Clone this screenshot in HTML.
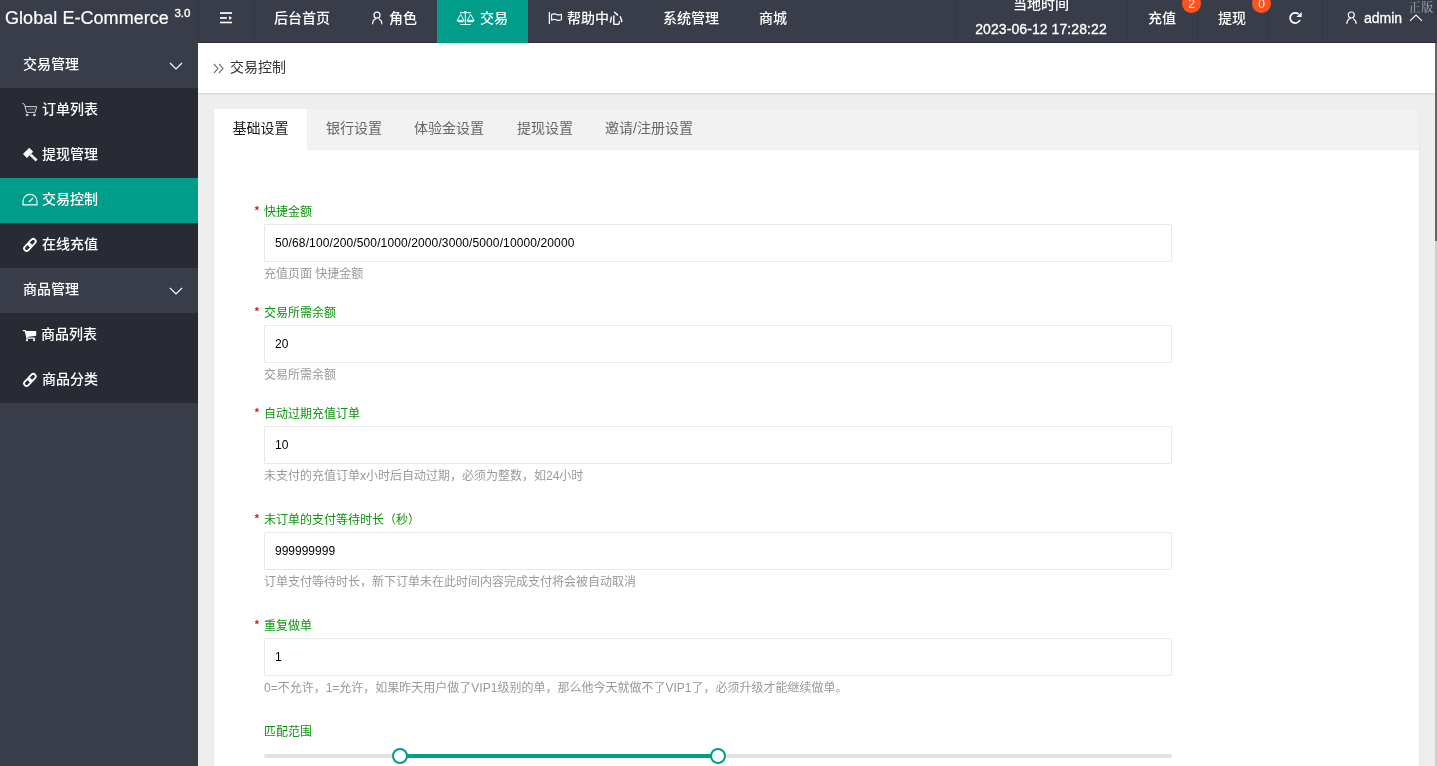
<!DOCTYPE html>
<html lang="zh-CN">
<head>
<meta charset="utf-8">
<title>交易控制</title>
<style>
*{box-sizing:border-box;margin:0;padding:0}
html,body{width:1437px;height:766px;overflow:hidden}
body{font-family:"Liberation Sans","Noto Sans CJK SC",sans-serif;font-size:14px;color:#333;background:#eeeeee;position:relative}
#root{position:absolute;left:0;top:0;width:1437px;height:766px;overflow:hidden;will-change:transform}
.abs{position:absolute}
/* header */
#hd{position:absolute;left:0;top:0;width:1437px;height:43px;background:#393d49;color:#fff;z-index:5}
#logo{position:absolute;left:5px;top:0.5px;height:43px;line-height:35px;font-size:18px;white-space:nowrap;letter-spacing:0.05px;-webkit-text-stroke:0.2px #fff}
#logo sup{font-size:11.5px;font-weight:400;position:relative;top:0px;left:-0.5px;letter-spacing:0;-webkit-text-stroke:0.35px #fff;vertical-align:super;line-height:0;margin-left:1px}
.nv{position:absolute;top:0;height:43px;line-height:36px;font-size:14px;color:#fff;white-space:nowrap;font-weight:500}
.sep{position:absolute;top:0;width:1px;height:43px;background:#343845}
.badge{position:absolute;top:-6.5px;width:19px;height:19px;border-radius:9.5px;background:#fb5420;color:#fff;font-size:12px;line-height:21px;text-align:center}
/* side */
#side{position:absolute;left:0;top:43px;width:198px;height:723px;background:#393d49}
.mi{position:absolute;left:0;width:198px;height:45px;line-height:43px;color:#fff;font-size:14px;font-weight:500;white-space:nowrap}
.mi.sub{background:#282b33}
.mi.act{background:#009d8b}
.mi span.t{position:absolute;top:0}
/* crumb */
#crumb{position:absolute;left:198px;top:43px;width:1237px;height:50px;background:#fff;box-shadow:0 1px 2px rgba(0,0,0,.12);line-height:48px;font-size:14px;color:#333}
/* card */
#card{position:absolute;left:214px;top:109px;width:1205px;height:700px;background:#fff;box-shadow:0 1px 2px 0 rgba(0,0,0,.06)}
#tabs{position:absolute;left:0;top:0;width:1205px;height:41px;background:#f2f2f2;border-bottom:1px solid #ebebeb}
.tab{position:absolute;top:0;height:40px;line-height:39px;font-size:14px;color:#666;white-space:nowrap}
.tab.on{left:0;width:93px;height:41px;background:#fff;color:#1a1a1a;text-align:center}
.lb{position:absolute;left:264px;font-size:12px;line-height:16px;color:#0c940c;white-space:nowrap}
.st{position:absolute;left:254.7px;font-size:11px;line-height:14px;color:#c9151b;font-weight:bold;margin-top:0px}
.ip{position:absolute;left:264px;width:908px;height:38px;border:1px solid #e8e8e8;border-radius:1px;background:#fff;font-size:12px;line-height:36px;padding-left:10px;color:#000;white-space:nowrap}
.hp{position:absolute;left:264px;font-size:12px;line-height:16px;color:#999;white-space:nowrap}
</style>
</head>
<body>
<div id="root">
<!-- breadcrumb -->
<div id="crumb">
  <svg class="abs" style="left:15px;top:20px" width="11" height="11" viewBox="0 0 11 11" fill="none" stroke="#777" stroke-width="1.15"><path d="M1 1l4 4.5L1 10M6 1l4 4.5L6 10"/></svg>
  <span class="abs" style="left:32px;top:0">交易控制</span>
</div>

<!-- card -->
<div id="card">
  <div id="tabs">
    <div class="tab on">基础设置</div>
    <div class="tab" style="left:112px">银行设置</div>
    <div class="tab" style="left:200px">体验金设置</div>
    <div class="tab" style="left:303px">提现设置</div>
    <div class="tab" style="left:391px">邀请/注册设置</div>
  </div>
</div>

<!-- form -->
<div class="st" style="top:203px">*</div><div class="lb" style="top:204px">快捷金额</div>
<div class="ip" style="top:224px;letter-spacing:0.12px">50/68/100/200/500/1000/2000/3000/5000/10000/20000</div>
<div class="hp" style="top:266px">充值页面 快捷金额</div>

<div class="st" style="top:304px">*</div><div class="lb" style="top:305px">交易所需余额</div>
<div class="ip" style="top:325px">20</div>
<div class="hp" style="top:367px">交易所需余额</div>

<div class="st" style="top:405px">*</div><div class="lb" style="top:406px">自动过期充值订单</div>
<div class="ip" style="top:426px">10</div>
<div class="hp" style="top:468px">未支付的充值订单x小时后自动过期，必须为整数，如24小时</div>

<div class="st" style="top:511px">*</div><div class="lb" style="top:512px">未订单的支付等待时长（秒）</div>
<div class="ip" style="top:532px">999999999</div>
<div class="hp" style="top:574px">订单支付等待时长，新下订单未在此时间内容完成支付将会被自动取消</div>

<div class="st" style="top:617px">*</div><div class="lb" style="top:618px">重复做单</div>
<div class="ip" style="top:638px">1</div>
<div class="hp" style="top:680px">0=不允许，1=允许，如果昨天用户做了VIP1级别的单，那么他今天就做不了VIP1了，必须升级才能继续做单。</div>

<div class="lb" style="top:724px">匹配范围</div>
<div class="abs" style="left:264px;top:754px;width:908px;height:4px;background:#e2e2e2;border-radius:2px"></div>
<div class="abs" style="left:400px;top:754px;width:318px;height:4px;background:#009d8b"></div>
<div class="abs" style="left:392px;top:748px;width:16px;height:16px;border-radius:8px;border:2px solid #009d8b;background:#fff"></div>
<div class="abs" style="left:710px;top:748px;width:16px;height:16px;border-radius:8px;border:2px solid #009d8b;background:#fff"></div>

<!-- scrollbar -->
<div class="abs" style="left:1435px;top:43px;width:2px;height:723px;background:#cfcfcf"></div>
<div class="abs" style="left:1435px;top:43px;width:2px;height:198px;background:#666"></div>

<!-- sidebar -->
<div id="side">
  <div class="mi" style="top:0"><span class="t" style="left:23px">交易管理</span>
    <svg class="abs" style="left:169px;top:19px" width="14" height="8" viewBox="0 0 14 8" fill="none" stroke="#fff" stroke-width="1.2"><path d="M1 1l6 6 6-6"/></svg></div>
  <div class="mi sub" style="top:45px"><span class="t" style="left:42px">订单列表</span></div>
  <div class="mi sub" style="top:90px"><span class="t" style="left:42px">提现管理</span></div>
  <div class="mi sub act" style="top:135px"><span class="t" style="left:42px">交易控制</span></div>
  <div class="mi sub" style="top:180px"><span class="t" style="left:42px">在线充值</span></div>
  <div class="mi" style="top:225px"><span class="t" style="left:23px">商品管理</span>
    <svg class="abs" style="left:169px;top:19px" width="14" height="8" viewBox="0 0 14 8" fill="none" stroke="#fff" stroke-width="1.2"><path d="M1 1l6 6 6-6"/></svg></div>
  <div class="mi sub" style="top:270px"><span class="t" style="left:41px">商品列表</span></div>
  <div class="mi sub" style="top:315px"><span class="t" style="left:42px">商品分类</span></div>
</div>


<svg class="abs" style="left:0;top:0;z-index:4" width="198" height="766" viewBox="0 0 198 766" fill="none">
  <!-- cart outline -->
  <g stroke="#d2d3d6" stroke-width="1" stroke-linecap="round" stroke-linejoin="round">
    <path d="M22.6 103.4l1.9 1 2.1 8h8.4l1.7-5.8H25.4"/><path d="M28.3 109.2h6" stroke-opacity=".45"/>
    <circle cx="27" cy="115" r="0.9" fill="#d2d3d6"/><circle cx="34.3" cy="115" r="0.9" fill="#d2d3d6"/>
  </g>
  <!-- gavel -->
  <g fill="#fff">
    <path d="M29.3 147.8l3.9 3.9-6.3 6.3-3.9-3.9z"/>
    <path d="M31.4 153.7l6.1 5.9-1.8 1.8-6.1-5.9z"/>
  </g>
  <!-- dashboard -->
  <g stroke="#e6fffb" stroke-width="1.2" stroke-linejoin="round" stroke-linecap="round">
    <path d="M23 204.8v-3.5a7 7 0 0 1 14 0v3.5z"/>
    <path d="M29.4 201.6l3.4-3.3" stroke-width="1.4"/>
  </g>
  <!-- link -->
  <g stroke="#fff" stroke-width="1.8">
    <rect x="-4.1" y="-2.5" width="8.2" height="5" rx="2.5" transform="translate(27.7 247.2) rotate(-45)"/>
    <rect x="-4.1" y="-2.5" width="8.2" height="5" rx="2.5" transform="translate(32.1 242.6) rotate(-45)"/>
    <rect x="-4.1" y="-2.5" width="8.2" height="5" rx="2.5" transform="translate(27.7 382.2) rotate(-45)"/>
    <rect x="-4.1" y="-2.5" width="8.2" height="5" rx="2.5" transform="translate(32.1 377.6) rotate(-45)"/>
  </g>
  <!-- cart filled -->
  <g fill="#fff">
    <path d="M25.6 331.1h10.6v4.7l-9.2 1.1z"/>
    <path d="M22.8 330.6h2.5l1.7 7.6h8.2" stroke="#fff" stroke-width="1.3" fill="none"/>
    <circle cx="27" cy="340.2" r="1.1"/><circle cx="34" cy="340.2" r="1.1"/>
  </g>
</svg>

<!-- header -->
<div id="hd">
  <div class="abs" style="left:198px;top:42px;width:1239px;height:1px;background:rgba(20,22,30,.45)"></div>
  <div class="sep" style="left:198px"></div>
  <div class="sep" style="left:254px"></div>
  <div class="sep" style="left:955px"></div>
  <div class="sep" style="left:1127px"></div>
  <div class="sep" style="left:1197px"></div>
  <div class="sep" style="left:1267px"></div>
  <div class="sep" style="left:1322px"></div>
  <div id="logo">Global E-Commerce <sup>3.0</sup></div>
  <div class="nv" style="left:274px">后台首页</div>
  <div class="nv" style="left:389px">角色</div>
  <div class="abs" style="left:437px;top:0;width:91px;height:43px;background:#009d8b"></div>
  <div class="nv" style="left:480px">交易</div>
  <div class="nv" style="left:567px">帮助中心</div>
  <div class="nv" style="left:663px">系统管理</div>
  <div class="nv" style="left:759px">商城</div>

  <div class="nv" style="left:955px;width:172px;text-align:center;line-height:20px;top:-6px;font-weight:500">当地时间</div>
  <div class="nv" style="left:955px;width:172px;text-align:center;line-height:20px;top:19px;font-weight:400;-webkit-text-stroke:0.3px #fff;letter-spacing:0.08px">2023-06-12 17:28:22</div>
  <div class="nv" style="left:1148px">充值</div>
  <div class="badge" style="left:1182px">2</div>
  <div class="nv" style="left:1218px">提现</div>
  <div class="badge" style="left:1252px">0</div>
  <div class="nv" style="left:1364px;font-weight:400;-webkit-text-stroke:0.3px #fff">admin</div>

  <svg class="abs" style="left:0;top:0" width="1437" height="43" viewBox="0 0 1437 43" fill="none">
    <!-- hamburger -->
    <g fill="#fff">
      <rect x="220" y="12.2" width="12" height="1.7"/>
      <rect x="220" y="17.1" width="6.8" height="1.7"/>
      <path d="M229.2 16l2.9 2-2.9 2z"/>
      <rect x="220" y="21.7" width="12" height="1.6"/>
    </g>
    <!-- user -->
    <g id="uico" stroke="#fff" stroke-width="1.2" stroke-linecap="round">
      <circle cx="377" cy="15.2" r="3"/>
      <path d="M372.6 23.8c0-2.6 1.3-4.4 3.3-5.1M379.3 19.1c1.6 1 2.5 2.7 2.5 4.7"/>
    </g>
    <g stroke="#fff" stroke-width="1.2" stroke-linecap="round" transform="translate(974.3 -0.2)">
      <circle cx="377" cy="15.2" r="3"/>
      <path d="M372.6 23.8c0-2.6 1.3-4.4 3.3-5.1M379.3 19.1c1.6 1 2.5 2.7 2.5 4.7"/>
    </g>
    <!-- scales -->
    <g stroke="#e6fffb" stroke-width="1.1" stroke-linejoin="round">
      <path d="M460 12.6h11M465.4 12.6v12M460.3 24.5h10.5"/>
      <circle cx="465.4" cy="12.2" r="0.7" fill="#e6fffb"/>
      <path d="M457.3 20.3l3.3-6 3.3 6M467.3 20.3l3.3-6 3.3 6" stroke-width="1"/>
      <path d="M456.9 20.2h7.4a3.7 1.9 0 0 1-7.4 0zM466.9 20.2h7.4a3.7 1.9 0 0 1-7.4 0z" fill="#e6fffb" stroke-width="0.6"/>
    </g>
    <!-- flag -->
    <g stroke="#fff" stroke-width="1.1" stroke-linejoin="round">
      <path d="M549.4 12.1V24" stroke-width="1.3"/>
      <path d="M551.6 14.6c1.9-1.1 3.6-.9 5.1-.2 1.5.7 3 .6 4.7-.2v5.5c-1.7.8-3.2.9-4.7.2-1.5-.7-3.2-.9-5.1.2z"/>
    </g>
    <!-- refresh -->
    <g>
      <path d="M1298.5 14A5.1 5.1 0 1 0 1299.9 20" stroke="#fff" stroke-width="1.8"/>
      <path d="M1301.7 12v5h-5.4z" fill="#fff"/>
    </g>
    <!-- caret -->
    <path d="M1410 20.8l6-5.8 6 5.8" stroke="#fff" stroke-width="1.1"/>
  </svg>
  <div class="abs" style="left:1408.5px;top:-1.5px;font-size:12px;line-height:18px;color:#a6a8af;white-space:nowrap;font-family:'Liberation Serif','Noto Serif CJK SC',serif;letter-spacing:0.8px">正版</div>
</div>
</div>
</body>
</html>
